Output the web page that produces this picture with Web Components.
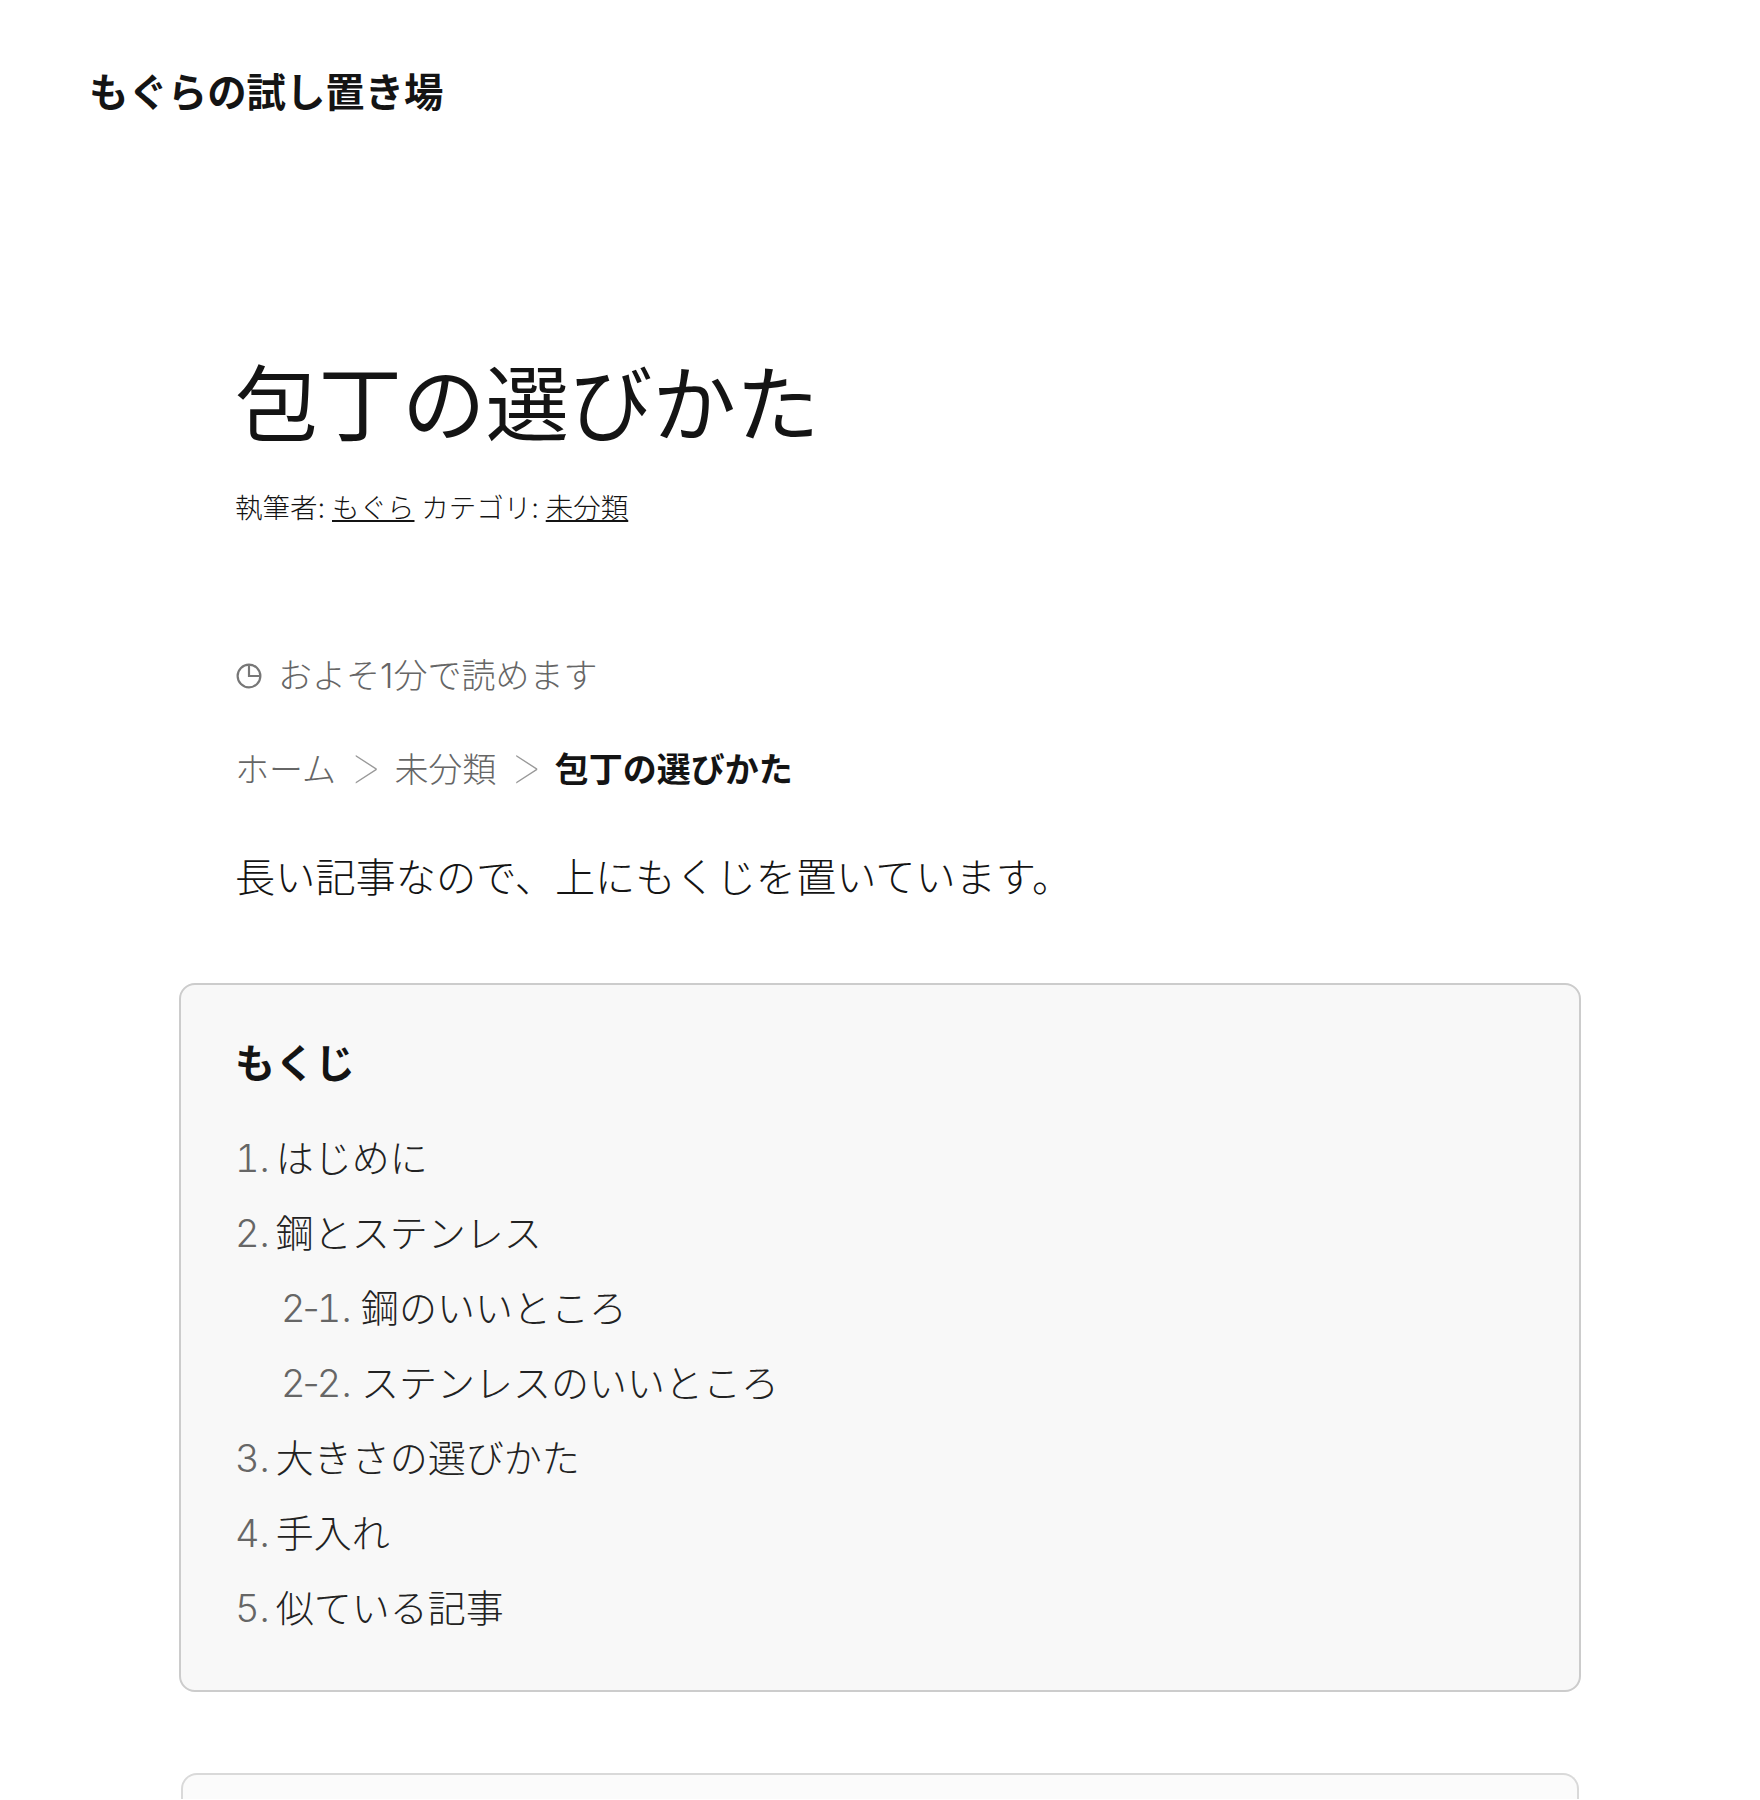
<!DOCTYPE html>
<html lang="ja"><head><meta charset="utf-8"><title>包丁の選びかた</title>
<style>
html,body{margin:0;padding:0;background:#fff;height:1800px;overflow:hidden}
body{font-family:Inter,"Noto Sans CJK JP","Noto Sans",sans-serif;color:#141414;font-weight:300}
</style></head><body>
<site-header>もぐらの試し置き場</site-header>
<main-article>
  <article-title>包丁の選びかた</article-title>
  <article-meta></article-meta>
  <reading-time>およそ1分で読めます</reading-time>
  <bread-crumbs></bread-crumbs>
  <lead-text>長い記事なので、上にもくじを置いています。</lead-text>
  <toc-box></toc-box>
  <next-box></next-box>
</main-article>
<script>
function def(name,css,html){customElements.define(name,class extends HTMLElement{constructor(){super();const r=this.attachShadow({mode:'open'});r.innerHTML='<style>'+css+'</style>'+html;}});}
def('site-header',':host{display:block;padding:62px 0 0 89px;height:240px;box-sizing:border-box;font-size:39.4px;font-weight:700;line-height:62px;color:#141414}','<slot></slot>');
def('main-article',':host{display:block;margin:0 179px 0 179px}','<slot></slot>');
def('article-title',':host{display:block;padding-left:56px;font-size:83.5px;line-height:120px;font-weight:400;margin-top:105px;color:#141414}','<slot></slot>');
def('article-meta',':host{display:block;padding-left:56px;font-size:27.5px;word-spacing:-1px;line-height:40px;margin-top:23px;color:#141414}a{color:inherit;text-decoration:underline}','執筆者: <a href="#">もぐら</a> カテゴリ: <a href="#">未分類</a>');
def('reading-time',':host{display:flex;align-items:center;gap:16px;padding-left:57px;font-size:34px;line-height:48px;margin-top:124px;color:#666}svg{width:26px;height:26px;flex:none}','<svg viewBox="0 0 24 24" fill="none" stroke="#777" stroke-width="2"><circle cx="12" cy="12" r="10.5"/><path d="M12 2v10h10"/></svg><span><slot></slot></span>');
def('bread-crumbs',':host{display:flex;align-items:center;padding-left:56px;font-size:34px;line-height:48px;margin-top:46px;color:#666}b{font-weight:700;color:#141414}i{font-style:normal;color:#999;margin:-9px 12px 0;font-size:54px;font-weight:100;line-height:48px}','<span>ホーム</span><i>&gt;</i><span>未分類</span><i>&gt;</i><b>包丁の選びかた</b>');
def('lead-text',':host{display:block;padding-left:56px;font-size:40.2px;line-height:62px;margin-top:53px;color:#141414}','<slot></slot>');
def('toc-box',':host{display:block;box-sizing:border-box;height:709px;margin-top:74px;padding:49px 54px;background:#f8f8f8;border:2px solid #ccc;border-radius:16px}h2{margin:0 0 27px;font-size:40px;line-height:60px;font-weight:700;color:#141414}ol{list-style:none;margin:0;padding:0;font-size:38px;line-height:75px;color:#222;font-variant-numeric:tabular-nums}li.s{padding-left:46px}span{color:#666;margin-right:6px}li.s span{margin-right:9.5px}u{text-decoration:none;font-variant-numeric:normal;margin:0 -3px}','<h2>もくじ</h2><ol><li><span>1.</span>はじめに</li><li><span>2.</span>鋼とステンレス</li><li class="s"><span>2<u>-</u>1.</span>鋼のいいところ</li><li class="s"><span>2<u>-</u>2.</span>ステンレスのいいところ</li><li><span>3.</span>大きさの選びかた</li><li><span>4.</span>手入れ</li><li><span>5.</span>似ている記事</li></ol>');
def('next-box',':host{display:block;box-sizing:border-box;height:26px;margin:81px 2px 0;background:#fbfbfb;border:2px solid #d9d9d9;border-bottom:0;border-radius:16px 16px 0 0}','');
</script>
</body></html>
